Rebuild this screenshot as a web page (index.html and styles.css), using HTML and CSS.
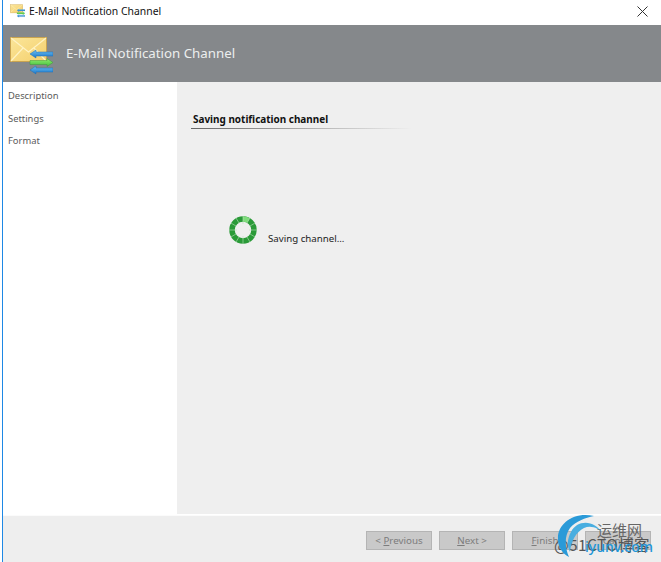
FILE: index.html
```html
<!DOCTYPE html>
<html lang="en">
<head>
<meta charset="utf-8">
<title>E-Mail Notification Channel</title>
<link rel="stylesheet" href="styles.css">
</head>
<body>
<svg class="defs" width="0" height="0" aria-hidden="true">
  <defs>
    <linearGradient id="env" x1="0" y1="0" x2="1" y2="1">
      <stop offset="0" stop-color="#fbe69a"/>
      <stop offset="1" stop-color="#f4cf6c"/>
    </linearGradient>
    <linearGradient id="blue" x1="0" y1="0" x2="0" y2="1">
      <stop offset="0" stop-color="#6cc0f2"/>
      <stop offset="1" stop-color="#1a76c8"/>
    </linearGradient>
    <linearGradient id="green" x1="0" y1="0" x2="0" y2="1">
      <stop offset="0" stop-color="#90ee70"/>
      <stop offset="1" stop-color="#44bf3c"/>
    </linearGradient>
    <symbol id="mail" viewBox="0 0 43 38">
      <rect x="0.5" y="0.5" width="36" height="24" fill="url(#env)" stroke="#c9a450"/>
      <path d="M1 1L18.5 15L36 1M1 24L13 11M36 24L24 11" fill="none" stroke="#fff3c4" stroke-width="1.2"/>
      <path d="M20 17L26 13V15H43V19H26V21Z" fill="url(#blue)" stroke="#1c6fb8" stroke-width=".5"/>
      <path d="M43 25.500L37 21.500V23.500H20V27.500H37V29.500Z" fill="url(#green)" stroke="#3c9c3c" stroke-width=".5"/>
      <path d="M20 33L26 29V31H43V35H26V37Z" fill="url(#blue)" stroke="#1c6fb8" stroke-width=".5"/>
    </symbol>
  </defs>
</svg>
<div class="window">
  <div class="titlebar">
    <svg class="title-icon" width="15" height="14"><use href="#mail"/></svg>
    <span class="title-text">E-Mail Notification Channel</span>
    <svg class="close" width="11" height="11" viewBox="0 0 11 11"><path d="M.5.5L10.500 10.500M10.500.5L.5 10.500" stroke="#333" stroke-width="1" fill="none"/></svg>
  </div>
  <div class="banner">
    <svg class="banner-icon" width="43" height="38"><use href="#mail"/></svg>
    <span class="banner-text">E-Mail Notification Channel</span>
  </div>
  <div class="main">
    <nav class="sidebar">
      <div class="nav-item">Description</div>
      <div class="nav-item">Settings</div>
      <div class="nav-item">Format</div>
    </nav>
    <div class="content">
      <div class="section-head">Saving notification channel</div>
      <div class="progress">
        <svg class="spinner" width="28" height="28" viewBox="0 0 28 28">
          <circle cx="14" cy="14" r="11" fill="none" stroke="#2a9a38" stroke-width="5.500"/>
          <path d="M14 3A11 11 0 0 1 19.500 4.500" fill="none" stroke="#7fdc7c" stroke-width="5.500"/>
          <path d="M14 0V8M21 1.900L18 7M26.100 7L21 10M28 14H20M26.100 21L21 18M21 26.100L18 21M14 28V20M7 26.100L10 21M1.900 21L7 18M0 14H8M1.900 7L7 10M7 1.900L10 7" stroke="#b8e0ba" stroke-width=".6" fill="none"/>
        </svg>
        <span class="progress-text">Saving channel...</span>
      </div>
    </div>
  </div>
  <div class="footer">
    <button class="btn" disabled>&lt; <u>P</u>revious</button>
    <button class="btn" disabled><u>N</u>ext &gt;</button>
    <button class="btn" disabled><u>F</u>inish</button>
    <button class="btn" disabled>Cancel</button>
  </div>
</div>
<div class="watermark">
  <span class="wm-cn">运维网</span>
  <span class="wm-at">@51CTO博客</span>
  <svg class="wm-ring" width="64" height="48" viewBox="0 0 64 48">
    <path d="M38 2C18 -3 1 10 2 25C2 33 6 39 13 43C9 34 8 22 14 14C20 7 29 4 38 2Z" fill="#2a9ad8"/>
    <path d="M47 20C38 5 21 6 15 18C11 25 11 32 14 38C15 27 20 18 28 14C35 11 43 14 47 20Z" fill="#49aee0"/>
  </svg>
  <span class="wm-url">iyunv.com</span>
</div>
</body>
</html>
```

FILE: styles.css
```css
* { box-sizing: border-box; }
html, body { margin: 0; padding: 0; background: #fff; overflow: hidden; }
body { position: relative; width: 661px; height: 562px; font-family: "Noto Sans", "Open Sans", sans-serif; }
.defs { position: absolute; }
.window {
  margin-left: 2px;
  width: 659px;
  height: 562px;
  border-left: 1px solid #1e88e5;
  display: flex;
  flex-direction: column;
}
.titlebar {
  height: 25px;
  display: flex;
  align-items: center;
  padding: 0 13px 3px 7px;
  background: #fff;
}
.title-icon { margin-right: 4px; }
.title-text { font-size: 10.400px; color: #111; flex: 1; }
.banner {
  height: 57px;
  background: #85888b;
  display: flex;
  align-items: flex-start;
  padding: 12px 0 0 7px;
}
.banner-icon { margin-right: 13px; }
.banner-text { font-size: 13.300px; line-height: 32px; color: #eceeee; }
.main { flex: 1; display: flex; min-height: 0; border-bottom: 1px solid #fbfbfb; }
.sidebar { width: 174px; background: #fff; padding-top: 3px; }
.nav-item { height: 22.500px; line-height: 22px; font-size: 9.400px; color: #5a5a5a; padding-left: 5px; }
.content { flex: 1; background: #efefef; padding: 29px 0 0 14px; border-bottom: 1px solid #fff; }
.section-head {
  width: 220px;
  height: 18px;
  padding-left: 2px;
  font-size: 9.950px;
  line-height: 17px;
  font-weight: 700;
  color: #111;
  border-bottom: 1px solid;
  border-image: linear-gradient(90deg, #666, #efefef) 1;
}
.progress { display: flex; align-items: flex-start; margin: 87px 0 0 38px; }
.spinner { flex: none; }
.progress-text { font-size: 9.700px; line-height: 14px; color: #222; margin: 16px 0 0 11px; }
.footer {
  height: 46px;
  flex: none;
  background: #eee;
  display: flex;
  justify-content: flex-end;
  gap: 7px;
  padding: 15px 10px 0 0;
}
.btn {
  width: 66px;
  height: 19px;
  padding: 0;
  background: #c9c9c9;
  border: 1px solid #b4b4b4;
  color: #7c7c7c;
  font-family: inherit;
  font-size: 9.800px;
  line-height: 16px;
}
.watermark { position: absolute; left: 556px; top: 514px; width: 105px; height: 48px; pointer-events: none; }
.wm-ring { position: absolute; left: 0; top: 0; }
.wm-cn { position: absolute; left: 41px; top: 6px; font-family: "Noto Sans CJK SC", sans-serif; font-size: 15px; line-height: 20px; color: #666; }
.wm-at { position: absolute; left: -2px; top: 21px; font-family: "Noto Sans CJK SC", sans-serif; font-size: 15.500px; line-height: 18px; letter-spacing: .4px; color: #555; white-space: nowrap; }
.wm-url { position: absolute; left: 29px; top: 23px; font-size: 14px; line-height: 20px; font-weight: 500; color: #1e96d8; white-space: nowrap; }
```
